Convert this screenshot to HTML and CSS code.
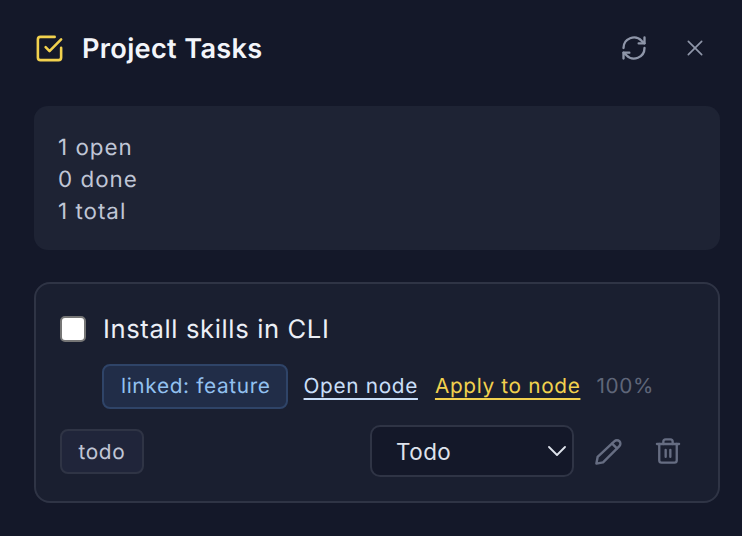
FILE: index.html
```html
<!DOCTYPE html>
<html>
	<head>
		<meta charset="UTF-8">
		<title>Project Tasks</title>
		<link rel="stylesheet" href="styles.css">
	</head>
	<body>
		<div class="panel">
			<div class="header">
				<div class="title">
					<svg class="title-icon" viewBox="0 0 24 24" fill="none" stroke="currentColor" stroke-width="2" stroke-linecap="round" stroke-linejoin="round">
						<path d="M21 11.500V19a2 2 0 0 1-2 2H5a2 2 0 0 1-2-2V5a2 2 0 0 1 2-2h11"/>
						<path d="M9 11l3 3L21 5"/>
					</svg>
					<h1>Project Tasks</h1>
				</div>
				<div class="header-btns">
					<svg class="icon-refresh" viewBox="0 0 24 24" fill="none" stroke="currentColor" stroke-width="2" stroke-linecap="round" stroke-linejoin="round">
						<path d="M3 12a9 9 0 0 1 15.5-6.2L21 8"/>
						<path d="M21 3v5h-5"/>
						<path d="M21 12a9 9 0 0 1-15.5 6.2L3 16"/>
						<path d="M3 21v-5h5"/>
					</svg>
					<svg class="icon-close" viewBox="0 0 24 24" fill="none" stroke="currentColor" stroke-width="2" stroke-linecap="round">
						<path d="M4 4l16 16M20 4L4 20"/>
					</svg>
				</div>
			</div>
			<div class="summary">
				<div>1 open</div>
				<div>0 done</div>
				<div>1 total</div>
			</div>
			<div class="task">
				<div class="task-top">
					<input class="task-check" type="checkbox" />
					<span class="task-name">Install skills in CLI</span>
				</div>
				<div class="task-links">
					<span class="linked">linked: feature</span>
					<a class="open-link" href="#">Open node</a>
					<a class="apply-link" href="#">Apply to node</a>
					<span class="percent">100%</span>
				</div>
				<div class="task-bottom">
					<span class="status">todo</span>
					<div class="task-actions">
						<select class="status-select">
							<option>Todo</option>
							<option>Doing</option>
							<option>Done</option>
						</select>
						<svg class="icon-edit" viewBox="0 0 24 24" fill="none" stroke="currentColor" stroke-width="2" stroke-linecap="round" stroke-linejoin="round">
							<path d="M17 3.500a2.800 2.800 0 0 1 4 4L7.500 21 2 22l1-5.500z"/>
							<path d="M15 5.500l4 4"/>
						</svg>
						<svg class="icon-trash" viewBox="0 0 24 24" fill="none" stroke="currentColor" stroke-width="2" stroke-linecap="round" stroke-linejoin="round">
							<path d="M2.500 6h19"/>
							<path d="M19.500 6v14a2 2 0 0 1-2 2h-11a2 2 0 0 1-2-2V6"/>
							<path d="M8 6V4a2 2 0 0 1 2-2h4a2 2 0 0 1 2 2v2"/>
							<path d="M10 11v6M14 11v6"/>
						</svg>
					</div>
				</div>
			</div>
		</div>
	</body>
</html>
```
FILE: styles.css
```css
html, body {
	height: 100%;
}
body {
	margin: 0;
	background-color: #141829;
	font-family: "Inter", "Liberation Sans", sans-serif;
	text-rendering: geometricPrecision;
	overflow: hidden;
}
.panel {
	padding: 26px 22px 0 34px;
}
.header {
	display: flex;
	align-items: center;
	justify-content: space-between;
	height: 44px;
	margin-bottom: 36px;
}
.title {
	display: flex;
	align-items: center;
	gap: 17px;
}
.title-icon {
	width: 31px;
	height: 31px;
	color: #f2d14e;
}
h1 {
	margin: 0;
	font-size: 27.2px;
	font-weight: 600;
	letter-spacing: 0.3px;
	color: #f3f5fa;
}
.header-btns {
	display: flex;
	align-items: center;
	gap: 37px;
	padding-right: 15px;
	color: #8f96a9;
}
.icon-refresh {
	width: 28px;
	height: 28px;
}
.icon-close {
	width: 20px;
	height: 20px;
}
.summary {
	height: 144px;
	box-sizing: border-box;
	padding: 26px 24px;
	margin-bottom: 32px;
	background-color: #1e2334;
	border-radius: 14px;
	font-size: 22.4px;
	letter-spacing: 1px;
	line-height: 32px;
	color: #c0c6d6;
}
.task {
	height: 221px;
	box-sizing: border-box;
	padding: 25px 24px 0;
	background-color: #1a1f30;
	border: 2px solid #2f3445;
	border-radius: 16px;
}
.task-top {
	display: flex;
	align-items: center;
	gap: 17px;
	height: 40px;
}
.task-check {
	appearance: none;
	width: 26px;
	height: 26px;
	margin: 0;
	background-color: #fff;
	border: 2px solid #767676;
	border-radius: 5px;
}
.task-name {
	font-size: 25.6px;
	letter-spacing: 0.62px;
	color: #eceff6;
}
.task-links {
	display: flex;
	align-items: center;
	gap: 16px;
	margin: 15px 0 0 42px;
	font-size: 20.8px;
	letter-spacing: 0.65px;
}
.linked {
	padding: 8px 15px 7px 17px;
	line-height: 26px;
	color: #93c1f0;
	background-color: #212d48;
	border: 2px solid #2f4468;
	border-radius: 8px;
}
.open-link {
	color: #c9def8;
	text-underline-offset: 5px;
}
.apply-link {
	margin-left: 1px;
	color: #f2d14e;
	text-underline-offset: 5px;
}
.percent {
	color: #5f6679;
}
.task-bottom {
	display: flex;
	align-items: center;
	justify-content: space-between;
	margin-top: 16px;
}
.status {
	padding: 9px 16.500px 6px;
	line-height: 26px;
	font-size: 20.8px;
	letter-spacing: 0.65px;
	color: #c0c6d6;
	background-color: #20253a;
	border: 2px solid #2f3445;
	border-radius: 8px;
}
.task-actions {
	display: flex;
	align-items: center;
	gap: 20px;
	padding-right: 12px;
}
.status-select {
	appearance: none;
	width: 204px;
	height: 52px;
	padding: 0 24px;
	font-family: inherit;
	font-size: 22.4px;
	letter-spacing: 0.5px;
	color: #dfe3ec;
	background-color: #141829;
	background-image: url("data:image/svg+xml,%3Csvg xmlns='http://www.w3.org/2000/svg' viewBox='0 0 18 10'%3E%3Cpath d='M1 1l8 8 8-8' fill='none' stroke='%23dfe3ec' stroke-width='1.800' stroke-linecap='round' stroke-linejoin='round'/%3E%3C/svg%3E");
	background-repeat: no-repeat;
	background-position: right 6px center;
	background-size: 18px 10px;
	border: 2px solid #2f3445;
	border-radius: 10px;
}
.icon-edit {
	width: 29px;
	height: 29px;
	color: #666d82;
}
.icon-trash {
	width: 28px;
	height: 28px;
	margin-left: 11px;
	color: #666d82;
}
```
